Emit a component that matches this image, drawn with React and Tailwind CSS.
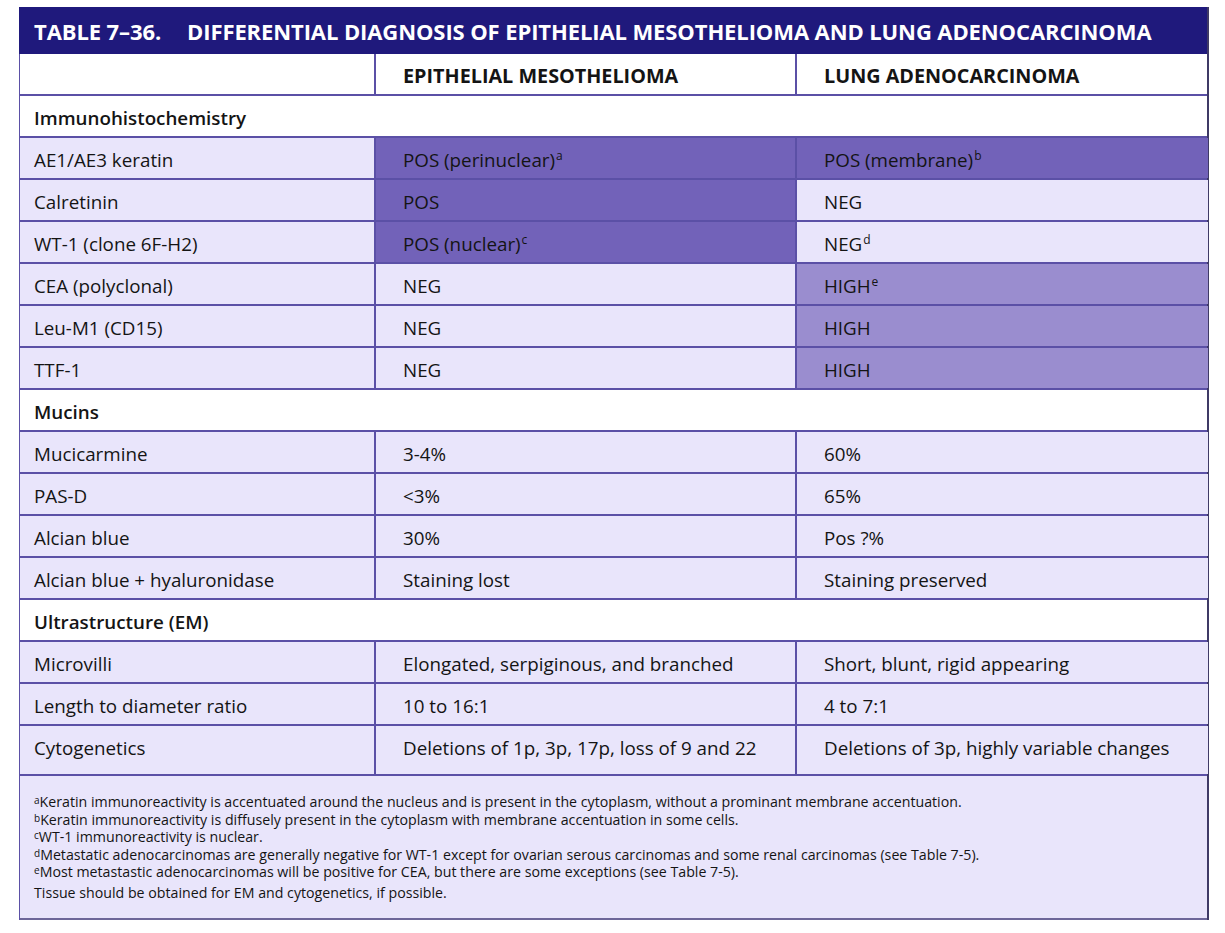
import React from "react";

const L = "bg-[#e9e5fb]";
const D = "bg-[#7262b9]";
const M = "bg-[#9a8dcf]";

const rows = [
  { section: "Immunohistochemistry" },
  { a: "AE1/AE3 keratin", b: "POS (perinuclear)", bs: "a", bc: D, c: "POS (membrane)", cs: "b", cc: D },
  { a: "Calretinin", b: "POS", bc: D, c: "NEG", cc: L },
  { a: "WT-1 (clone 6F-H2)", b: "POS (nuclear)", bs: "c", bc: D, c: "NEG", cs: "d", cc: L },
  { a: "CEA (polyclonal)", b: "NEG", bc: L, c: "HIGH", cs: "e", cc: M },
  { a: "Leu-M1 (CD15)", b: "NEG", bc: L, c: "HIGH", cc: M },
  { a: "TTF-1", b: "NEG", bc: L, c: "HIGH", cc: M },
  { section: "Mucins" },
  { a: "Mucicarmine", b: "3-4%", bc: L, c: "60%", cc: L },
  { a: "PAS-D", b: "<3%", bc: L, c: "65%", cc: L },
  { a: "Alcian blue", b: "30%", bc: L, c: "Pos ?%", cc: L },
  { a: "Alcian blue + hyaluronidase", b: "Staining lost", bc: L, c: "Staining preserved", cc: L },
  { section: "Ultrastructure (EM)" },
  { a: "Microvilli", b: "Elongated, serpiginous, and branched", bc: L, c: "Short, blunt, rigid appearing", cc: L },
  { a: "Length to diameter ratio", b: "10 to 16:1", bc: L, c: "4 to 7:1", cc: L },
  { a: "Cytogenetics", b: "Deletions of 1p, 3p, 17p, loss of 9 and 22", bc: L, c: "Deletions of 3p, highly variable changes", cc: L, tall: true },
];

const Sup = ({ children }) => (
  <span className="inline-block align-top text-[12px] leading-none relative top-[4px] ml-[1px]">{children}</span>
);

const notes = [
  ["a", "Keratin immunoreactivity is accentuated around the nucleus and is present in the cytoplasm, without a prominant membrane accentuation."],
  ["b", "Keratin immunoreactivity is diffusely present in the cytoplasm with membrane accentuation in some cells."],
  ["c", "WT-1 immunoreactivity is nuclear."],
  ["d", "Metastatic adenocarcinomas are generally negative for WT-1 except for ovarian serous carcinomas and some renal carcinomas (see Table 7-5)."],
  ["e", "Most metastastic adenocarcinomas will be positive for CEA, but there are some exceptions (see Table 7-5)."],
  [null, "Tissue should be obtained for EM and cytogenetics, if possible."],
];

export default function App() {
  return (
    <div
      className="w-[1225px] h-[933px] bg-white pl-[19px] pt-[7px] text-[#141414]"
      style={{ fontFamily: '"Open Sans", "Noto Sans", sans-serif' }}
    >
      <div className="w-[1190px] border-r-2 border-[#3f3a66]">
        <div className="h-[47px] bg-[#1f197c] flex items-center pl-[15px] pt-[2px] text-white font-bold text-[22px] tracking-[-0.1px]">
          <span>TABLE 7–36.</span>
          <span className="ml-[26px]">DIFFERENTIAL DIAGNOSIS OF EPITHELIAL MESOTHELIOMA AND LUNG ADENOCARCINOMA</span>
        </div>
        <div className="border-l border-[#5b50a6]">
          <div className="grid grid-cols-[356px_421px_411px] h-[42px] bg-white border-b-2 border-[#5b50a6]">
            <div className="border-r-2 border-[#5b50a6]" />
            <div className="border-r-2 border-[#5b50a6] flex items-center pl-[27px] pt-[4px] font-bold text-[19.8px]">EPITHELIAL MESOTHELIOMA</div>
            <div className="flex items-center pl-[27px] pt-[4px] font-bold text-[19.8px]">LUNG ADENOCARCINOMA</div>
          </div>
          {rows.map((r, i) => {
            if (r.section) {
              return (
                <div key={i} className="h-[42px] bg-white border-b-2 border-[#5b50a6] flex items-center pl-[14px] pt-[4px] font-semibold text-[18.8px]">
                  {r.section}
                </div>
              );
            }
            const pad = r.tall ? "pb-[4px]" : "pt-[4px]";
            return (
              <div
                key={i}
                className={`grid grid-cols-[356px_421px_411px] ${r.tall ? "h-[50px]" : "h-[42px]"} border-b-2 border-[#5b50a6] text-[18.8px]`}
              >
                <div className={`${L} ${pad} border-r-2 border-[#5b50a6] flex items-center pl-[14px]`}>{r.a}</div>
                <div className={`${r.bc} ${pad} border-r-2 border-[#5b50a6] flex items-center pl-[27px]`}>
                  <span>{r.b}{r.bs && <Sup>{r.bs}</Sup>}</span>
                </div>
                <div className={`${r.cc} ${pad} flex items-center pl-[27px]`}>
                  <span>{r.c}{r.cs && <Sup>{r.cs}</Sup>}</span>
                </div>
              </div>
            );
          })}
          <div className={`${L} h-[144px] border-b-2 border-[#6d6699] pl-[14px] pt-[17px] text-[14.2px] leading-[17.6px]`}>
            {notes.map(([s, t], i) => (
              <div key={i} className={i === 5 ? "mt-[3px]" : ""}>
                {s && <span className="inline-block align-top text-[10px] leading-none relative top-[2px]">{s}</span>}
                {t}
              </div>
            ))}
          </div>
        </div>
      </div>
    </div>
  );
}
